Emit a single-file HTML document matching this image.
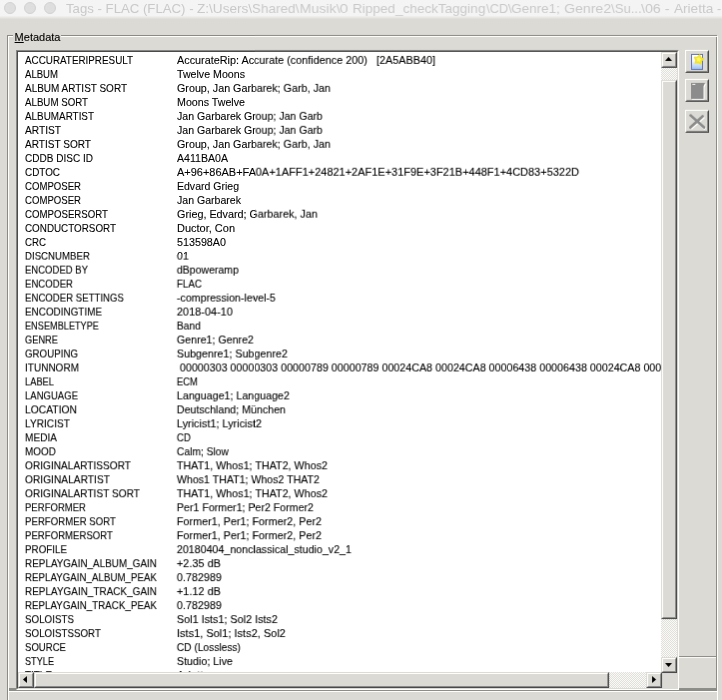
<!DOCTYPE html>
<html>
<head>
<meta charset="utf-8">
<title>Tags</title>
<style>
html,body{margin:0;padding:0;}
body{width:722px;height:700px;overflow:hidden;background:#dcdad4;position:relative;font-family:"Liberation Sans",sans-serif;font-size:11px;color:#000;}
#wrap{position:absolute;left:0;top:0;width:723px;height:701px;will-change:transform;transform-origin:0 0;transform:scale(0.99862,0.99857);background:#dcdad4;overflow:hidden;}
.abs{position:absolute;}
#titlebar{left:0;top:0;width:723px;height:16px;background:#f4f4f4;}
#titlefade{left:0;top:16px;width:723px;height:3px;background:linear-gradient(#f1f1f0,#e8e7e3 50%,#dedcd6);}
.tl{position:absolute;top:2px;width:10px;height:10px;border-radius:50%;background:#dedede;border:1px solid #d2d2d2;}
.tt{position:absolute;top:0px;font-size:13px;line-height:17px;color:#c9c9c9;white-space:pre;transform-origin:0 0;}
/* group box */
#grp{left:7px;top:35px;width:711px;height:700px;border:1px solid #8c8a86;box-sizing:border-box;}
#grp2{left:8px;top:36px;width:711px;height:700px;border:1px solid #fffffb;border-bottom:none;box-sizing:border-box;}
#grpcover{left:7px;top:35px;width:1px;height:1px;}
#glabel{left:13px;top:30px;height:14px;width:48px;background:#dcdad4;}
#glabel span{position:absolute;left:1.6px;top:0;line-height:14px;white-space:pre;-webkit-text-stroke:0.1px #000;}
/* list */
#list{left:16px;top:50px;width:664px;height:641px;box-sizing:border-box;border:1px solid;border-color:#868686 #fffffb #fffffb #868686;}
#list2{left:17px;top:51px;width:662px;height:639px;box-sizing:border-box;border:1px solid;border-color:#4a4a48 #dcdad4 #dcdad4 #4a4a48;background:#fff;}
#client{left:18px;top:52px;width:644px;height:621px;overflow:hidden;background:#fff;}
.r{position:absolute;left:0;height:14px;width:2000px;}
.t{position:absolute;top:0;line-height:14px;white-space:pre;transform-origin:0 0;display:inline-block;-webkit-text-stroke:0.1px #000;}
/* scrollbars */
.track{background-color:#dcdad4;background-image:conic-gradient(#fff 25%,#dcdad4 0 50%,#fff 0 75%,#dcdad4 0);background-size:2px 2px;}
.btn{position:absolute;box-sizing:border-box;background:#dcdad4;border:1px solid;border-color:#dcdad4 #48484a #48484a #dcdad4;}
.btn:before{content:"";position:absolute;left:0;top:0;right:0;bottom:0;border:1px solid;border-color:#fffffb #8a8a88 #8a8a88 #fffffb;}
.tb{position:absolute;box-sizing:border-box;background:#dcdad4;border:1px solid;border-color:#fffffb #48484a #48484a #fffffb;}
.tb:before{content:"";position:absolute;left:0;top:0;right:0;bottom:0;border:1px solid;border-color:#dcdad4 #8a8a88 #8a8a88 #dcdad4;}
svg{position:absolute;overflow:visible;}
</style>
</head>
<body>
<div id="wrap">
<!-- title bar -->
<div id="titlebar" class="abs"></div>
<div id="titlefade" class="abs"></div>
<div class="tl" style="left:4px"></div>
<div class="tl" style="left:24px"></div>
<div class="tl" style="left:44px"></div>
<span class="tt" style="left:66.09px;transform:scaleX(1.0146)">Tags - FLAC (FLAC) - </span>
<span class="tt" style="left:197.27px;transform:scaleX(1.0445)">Z:\Users\Shared\</span>
<span class="tt" style="left:299.91px;transform:scaleX(1.0797)">Musik\</span>
<span class="tt" style="left:340.47px;transform:scaleX(1.2005)">0 </span>
<span class="tt" style="left:353.49px;transform:scaleX(1.0410)">Ripped_checkTagging</span>
<span class="tt" style="left:486.67px;transform:scaleX(0.9821)">\CD\</span>
<span class="tt" style="left:512.21px;transform:scaleX(1.0391)">Genre1; </span>
<span class="tt" style="left:564.78px;transform:scaleX(1.0851)">Genre2</span>
<span class="tt" style="left:611.84px;transform:scaleX(1.0093)">\Su...</span>
<span class="tt" style="left:642.49px;transform:scaleX(1.0952)">\06 - </span>
<span class="tt" style="left:674.93px;transform:scaleX(1.0454)">Arietta </span>
<span class="tt" style="left:717.99px;transform:scaleX(0.9500)">- Jan Garbarek</span>

<!-- group box -->
<div id="grp" class="abs"></div>
<div id="grp2" class="abs"></div>
<div id="glabel" class="abs"><span><u>M</u>etadata</span></div>

<!-- right strip decorations -->
<div class="abs" style="left:680px;top:657px;width:37px;height:1px;background:#8c8a86"></div>
<div class="abs" style="left:680px;top:658px;width:37px;height:1px;background:#fffffb"></div>
<div class="abs" style="left:9px;top:689px;width:708px;height:3px;background:#8c8c88"></div>
<div class="abs" style="left:9px;top:692px;width:709px;height:1px;background:#fffffb"></div>
<div class="abs" style="left:9px;top:693px;width:709px;height:8px;background:#dcdad4"></div>

<!-- list box -->
<div id="list" class="abs"></div>
<div id="list2" class="abs"></div>
<div id="client" class="abs">
<div class="r" style="top:1px"><span class="t" style="left:6.5px;transform:scaleX(0.8955)">ACCURATERIPRESULT</span><span class="t" style="left:158.5px;transform:scaleX(0.9850)">AccurateRip: Accurate (confidence 200)   [2A5ABB40]</span></div>
<div class="r" style="top:15px"><span class="t" style="left:6.5px;transform:scaleX(0.8706)">ALBUM</span><span class="t" style="left:158.5px;transform:scaleX(0.9671)">Twelve Moons</span></div>
<div class="r" style="top:29px"><span class="t" style="left:6.5px;transform:scaleX(0.9068)">ALBUM ARTIST SORT</span><span class="t" style="left:158.5px;transform:scaleX(0.9762)">Group, Jan Garbarek; Garb, Jan</span></div>
<div class="r" style="top:43px"><span class="t" style="left:6.5px;transform:scaleX(0.8834)">ALBUM SORT</span><span class="t" style="left:158.5px;transform:scaleX(0.9699)">Moons Twelve</span></div>
<div class="r" style="top:57px"><span class="t" style="left:6.5px;transform:scaleX(0.8983)">ALBUMARTIST</span><span class="t" style="left:158.5px;transform:scaleX(0.9628)">Jan Garbarek Group; Jan Garb</span></div>
<div class="r" style="top:71px"><span class="t" style="left:6.5px;transform:scaleX(0.9249)">ARTIST</span><span class="t" style="left:158.5px;transform:scaleX(0.9628)">Jan Garbarek Group; Jan Garb</span></div>
<div class="r" style="top:85px"><span class="t" style="left:6.5px;transform:scaleX(0.9149)">ARTIST SORT</span><span class="t" style="left:158.5px;transform:scaleX(0.9762)">Group, Jan Garbarek; Garb, Jan</span></div>
<div class="r" style="top:99px"><span class="t" style="left:6.5px;transform:scaleX(0.9120)">CDDB DISC ID</span><span class="t" style="left:158.5px;transform:scaleX(0.9620)">A411BA0A</span></div>
<div class="r" style="top:113px"><span class="t" style="left:6.5px;transform:scaleX(0.8992)">CDTOC</span><span class="t" style="left:158.5px;transform:scaleX(0.9976)">A+96+86AB+FA0A+1AFF1+24821+2AF1E+31F9E+3F21B+448F1+4CD83+5322D</span></div>
<div class="r" style="top:127px"><span class="t" style="left:6.5px;transform:scaleX(0.8724)">COMPOSER</span><span class="t" style="left:158.5px;transform:scaleX(0.9566)">Edvard Grieg</span></div>
<div class="r" style="top:141px"><span class="t" style="left:6.5px;transform:scaleX(0.8724)">COMPOSER</span><span class="t" style="left:158.5px;transform:scaleX(0.9602)">Jan Garbarek</span></div>
<div class="r" style="top:155px"><span class="t" style="left:6.5px;transform:scaleX(0.8780)">COMPOSERSORT</span><span class="t" style="left:158.5px;transform:scaleX(0.9813)">Grieg, Edvard; Garbarek, Jan</span></div>
<div class="r" style="top:169px"><span class="t" style="left:6.5px;transform:scaleX(0.8952)">CONDUCTORSORT</span><span class="t" style="left:158.5px;transform:scaleX(0.9984)">Ductor, Con</span></div>
<div class="r" style="top:183px"><span class="t" style="left:6.5px;transform:scaleX(0.8807)">CRC</span><span class="t" style="left:158.5px;transform:scaleX(0.9766)">513598A0</span></div>
<div class="r" style="top:197px"><span class="t" style="left:6.5px;transform:scaleX(0.8789)">DISCNUMBER</span><span class="t" style="left:158.5px;transform:scaleX(0.9796)">01</span></div>
<div class="r" style="top:211px"><span class="t" style="left:6.5px;transform:scaleX(0.8660)">ENCODED BY</span><span class="t" style="left:158.5px;transform:scaleX(0.9564)">dBpoweramp</span></div>
<div class="r" style="top:225px"><span class="t" style="left:6.5px;transform:scaleX(0.8725)">ENCODER</span><span class="t" style="left:158.5px;transform:scaleX(0.8889)">FLAC</span></div>
<div class="r" style="top:239px"><span class="t" style="left:6.5px;transform:scaleX(0.8755)">ENCODER SETTINGS</span><span class="t" style="left:158.5px;transform:scaleX(0.9697)">-compression-level-5</span></div>
<div class="r" style="top:253px"><span class="t" style="left:6.5px;transform:scaleX(0.8999)">ENCODINGTIME</span><span class="t" style="left:158.5px;transform:scaleX(0.9950)">2018-04-10</span></div>
<div class="r" style="top:267px"><span class="t" style="left:6.5px;transform:scaleX(0.8348)">ENSEMBLETYPE</span><span class="t" style="left:158.5px;transform:scaleX(0.9337)">Band</span></div>
<div class="r" style="top:281px"><span class="t" style="left:6.5px;transform:scaleX(0.8435)">GENRE</span><span class="t" style="left:158.5px;transform:scaleX(0.9686)">Genre1; Genre2</span></div>
<div class="r" style="top:295px"><span class="t" style="left:6.5px;transform:scaleX(0.8847)">GROUPING</span><span class="t" style="left:158.5px;transform:scaleX(0.9757)">Subgenre1; Subgenre2</span></div>
<div class="r" style="top:309px"><span class="t" style="left:6.5px;transform:scaleX(0.9109)">ITUNNORM</span><span class="t" style="left:158.5px;transform:scaleX(0.9734)"> 00000303 00000303 00000789 00000789 00024CA8 00024CA8 00006438 00006438 00024CA8 00024CA8</span></div>
<div class="r" style="top:323px"><span class="t" style="left:6.5px;transform:scaleX(0.8467)">LABEL</span><span class="t" style="left:158.5px;transform:scaleX(0.8588)">ECM</span></div>
<div class="r" style="top:337px"><span class="t" style="left:6.5px;transform:scaleX(0.8669)">LANGUAGE</span><span class="t" style="left:158.5px;transform:scaleX(0.9722)">Language1; Language2</span></div>
<div class="r" style="top:351px"><span class="t" style="left:6.5px;transform:scaleX(0.9383)">LOCATION</span><span class="t" style="left:158.5px;transform:scaleX(0.9688)">Deutschland; München</span></div>
<div class="r" style="top:365px"><span class="t" style="left:6.5px;transform:scaleX(0.9240)">LYRICIST</span><span class="t" style="left:158.5px;transform:scaleX(0.9886)">Lyricist1; Lyricist2</span></div>
<div class="r" style="top:379px"><span class="t" style="left:6.5px;transform:scaleX(0.9184)">MEDIA</span><span class="t" style="left:158.5px;transform:scaleX(0.8810)">CD</span></div>
<div class="r" style="top:393px"><span class="t" style="left:6.5px;transform:scaleX(0.9055)">MOOD</span><span class="t" style="left:158.5px;transform:scaleX(0.9348)">Calm; Slow</span></div>
<div class="r" style="top:407px"><span class="t" style="left:6.5px;transform:scaleX(0.9207)">ORIGINALARTISSORT</span><span class="t" style="left:158.5px;transform:scaleX(0.9764)">THAT1, Whos1; THAT2, Whos2</span></div>
<div class="r" style="top:421px"><span class="t" style="left:6.5px;transform:scaleX(0.9291)">ORIGINALARTIST</span><span class="t" style="left:158.5px;transform:scaleX(0.9640)">Whos1 THAT1; Whos2 THAT2</span></div>
<div class="r" style="top:435px"><span class="t" style="left:6.5px;transform:scaleX(0.9222)">ORIGINALARTIST SORT</span><span class="t" style="left:158.5px;transform:scaleX(0.9764)">THAT1, Whos1; THAT2, Whos2</span></div>
<div class="r" style="top:449px"><span class="t" style="left:6.5px;transform:scaleX(0.8679)">PERFORMER</span><span class="t" style="left:158.5px;transform:scaleX(0.9660)">Per1 Former1; Per2 Former2</span></div>
<div class="r" style="top:463px"><span class="t" style="left:6.5px;transform:scaleX(0.8775)">PERFORMER SORT</span><span class="t" style="left:158.5px;transform:scaleX(0.9801)">Former1, Per1; Former2, Per2</span></div>
<div class="r" style="top:477px"><span class="t" style="left:6.5px;transform:scaleX(0.8744)">PERFORMERSORT</span><span class="t" style="left:158.5px;transform:scaleX(0.9801)">Former1, Per1; Former2, Per2</span></div>
<div class="r" style="top:491px"><span class="t" style="left:6.5px;transform:scaleX(0.8921)">PROFILE</span><span class="t" style="left:158.5px;transform:scaleX(0.9699)">20180404_nonclassical_studio_v2_1</span></div>
<div class="r" style="top:505px"><span class="t" style="left:6.5px;transform:scaleX(0.9009)">REPLAYGAIN_ALBUM_GAIN</span><span class="t" style="left:158.5px;transform:scaleX(0.9922)">+2.35 dB</span></div>
<div class="r" style="top:519px"><span class="t" style="left:6.5px;transform:scaleX(0.8861)">REPLAYGAIN_ALBUM_PEAK</span><span class="t" style="left:158.5px;transform:scaleX(0.9806)">0.782989</span></div>
<div class="r" style="top:533px"><span class="t" style="left:6.5px;transform:scaleX(0.9047)">REPLAYGAIN_TRACK_GAIN</span><span class="t" style="left:158.5px;transform:scaleX(0.9922)">+1.12 dB</span></div>
<div class="r" style="top:547px"><span class="t" style="left:6.5px;transform:scaleX(0.8897)">REPLAYGAIN_TRACK_PEAK</span><span class="t" style="left:158.5px;transform:scaleX(0.9806)">0.782989</span></div>
<div class="r" style="top:561px"><span class="t" style="left:6.5px;transform:scaleX(0.8904)">SOLOISTS</span><span class="t" style="left:158.5px;transform:scaleX(0.9833)">Sol1 Ists1; Sol2 Ists2</span></div>
<div class="r" style="top:575px"><span class="t" style="left:6.5px;transform:scaleX(0.8902)">SOLOISTSSORT</span><span class="t" style="left:158.5px;transform:scaleX(1.0014)">Ists1, Sol1; Ists2, Sol2</span></div>
<div class="r" style="top:589px"><span class="t" style="left:6.5px;transform:scaleX(0.8712)">SOURCE</span><span class="t" style="left:158.5px;transform:scaleX(0.9265)">CD (Lossless)</span></div>
<div class="r" style="top:603px"><span class="t" style="left:6.5px;transform:scaleX(0.8319)">STYLE</span><span class="t" style="left:158.5px;transform:scaleX(0.9742)">Studio; Live</span></div>
<div class="r" style="top:617px"><span class="t" style="left:6.5px;transform:scaleX(0.9014)">TITLE</span><span class="t" style="left:158.5px;transform:scaleX(1.0378)">Arietta</span></div>
</div>

<!-- vertical scrollbar -->
<div class="abs track" style="left:662px;top:52px;width:16px;height:622px"></div>
<div class="btn" style="left:662px;top:52px;width:16px;height:16px"><svg width="7" height="4" style="left:3px;top:4px" viewBox="0 0 7 4"><path d="M0 4 L3.5 0 L7 4 Z" fill="#000"/></svg></div>
<div class="btn" style="left:662px;top:80px;width:16px;height:540px"></div>
<div class="btn" style="left:662px;top:658px;width:16px;height:16px"><svg width="7" height="4" style="left:3px;top:5px" viewBox="0 0 7 4"><path d="M0 0 L7 0 L3.5 4 Z" fill="#000"/></svg></div>

<!-- horizontal scrollbar -->
<div class="abs track" style="left:18px;top:673px;width:644px;height:16px"></div>
<div class="btn" style="left:18px;top:673px;width:16px;height:16px"><svg width="4" height="7" style="left:4px;top:3px" viewBox="0 0 4 7"><path d="M4 0 L4 7 L0 3.5 Z" fill="#000"/></svg></div>
<div class="btn" style="left:34px;top:673px;width:576px;height:16px"></div>
<div class="abs" style="left:663px;top:674px;width:15px;height:15px;background:#dcdad4"></div>
<div class="btn" style="left:647px;top:673px;width:16px;height:16px"><svg width="4" height="7" style="left:5px;top:3px" viewBox="0 0 4 7"><path d="M0 0 L4 3.5 L0 7 Z" fill="#000"/></svg></div>

<!-- toolbar buttons -->
<div class="tb" style="left:686px;top:50px;width:24px;height:23px"><svg width="22" height="21" style="left:0;top:0" viewBox="686 51 22 21">
<defs><linearGradient id="dg" x1="0" y1="0" x2="0" y2="1"><stop offset="0" stop-color="#ffffff"/><stop offset="0.45" stop-color="#f0f6ff"/><stop offset="1" stop-color="#98c0f2"/></linearGradient></defs>
<rect x="691.5" y="54.5" width="11" height="15" fill="url(#dg)" stroke="#6272b4" stroke-width="1"/>
<path d="M699.67 54.88 L700.89 57.79 L703.75 59.10 L701.36 61.16 L700.99 64.29 L698.30 62.66 L695.20 63.27 L695.93 60.20 L694.39 57.45 L697.53 57.19Z" fill="#f6e826" stroke="#f0e02a" stroke-width="1.2" stroke-linejoin="round"/>
<path d="M699.15 57.04 L699.92 58.42 L701.27 59.24 L700.20 60.40 L699.84 61.94 L698.40 61.27 L696.83 61.41 L697.02 59.84 L696.40 58.38 L697.95 58.07Z" fill="#fdf66a"/>
</svg></div>
<div class="tb" style="left:686px;top:79px;width:24px;height:23px"><svg width="22" height="21" style="left:0;top:0" viewBox="686 80 22 21">
<path d="M692 84 H706 L704.5 87.5 V100 H692 Z" fill="#fffffb"/>
<path d="M691 83 H705 L703.5 86.5 V99 H691 Z" fill="#8c8c8c"/>
<rect x="692.3" y="84" width="3" height="1" fill="#f4f4f4"/>
</svg></div>
<div class="tb" style="left:686px;top:110px;width:24px;height:23px"><svg width="22" height="21" style="left:0;top:0" viewBox="686 111 22 21">
<g stroke="#fffffb" stroke-width="2.7" stroke-linecap="butt" fill="none" transform="translate(1,1)">
<path d="M690.2 115.2 L704.4 128"/><path d="M703 116 L690 127.8"/></g>
<g stroke="#8c8c8c" stroke-width="2.7" stroke-linecap="round" fill="none">
<path d="M690.5 115.6 L704 127.6"/><path d="M702.6 116.4 L690.4 127.6"/></g>
</svg></div>
</div>
</body>
</html>
